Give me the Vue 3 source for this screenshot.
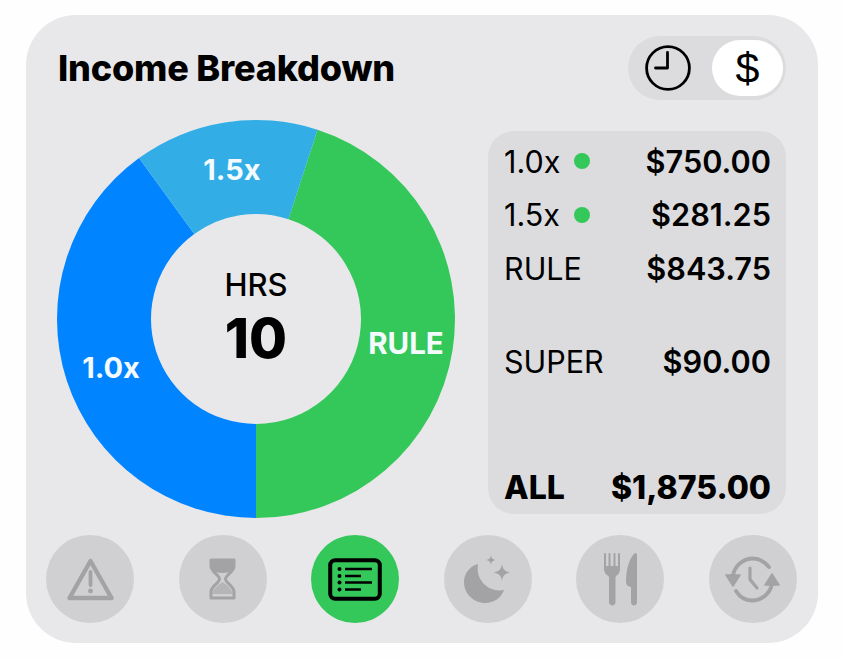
<script setup>
const rows = [
  { label: '1.0x', dot: true, value: '$750.00' },
  { label: '1.5x', dot: true, value: '$281.25' },
  { label: 'RULE', dot: false, value: '$843.75' },
]
const cx = 200, cy = 200, R = 199, r = 105
function pt(rad, deg) {
  const a = (deg - 90) * Math.PI / 180
  return `${(cx + rad * Math.cos(a)).toFixed(2)} ${(cy + rad * Math.sin(a)).toFixed(2)}`
}
function arc(a, b) {
  const large = b - a > 180 ? 1 : 0
  return `M${pt(R, a)}A${R} ${R} 0 ${large} 1 ${pt(R, b)}L${pt(r, b)}A${r} ${r} 0 ${large} 0 ${pt(r, a)}Z`
}
const segments = [
  { d: arc(18, 180), fill: '#34c759' },
  { d: arc(180, 324), fill: '#0084ff' },
  { d: arc(324, 378), fill: '#32ade6' },
]
</script>

<template>
  <div class="page">
    <div class="card">
      <header class="head">
        <h1 class="title">Income Breakdown</h1>
        <div class="toggle">
          <span class="opt">
            <svg width="46" height="46" viewBox="0 0 46 46" fill="none" stroke="#000" stroke-width="2.800">
              <circle cx="23" cy="23" r="21.400" />
              <path d="M22.500 7.500V23H10.500" stroke-linecap="round" stroke-linejoin="round" />
            </svg>
          </span>
          <span class="opt on">$</span>
        </div>
      </header>

      <div class="main">
        <div class="donut">
          <svg width="400" height="400" viewBox="0 0 400 400">
            <path v-for="s in segments" :key="s.fill" :d="s.d" :fill="s.fill" />
          </svg>
          <span class="seg s15">1.5x</span>
          <span class="seg s10">1.0x</span>
          <span class="seg srule">RULE</span>
          <div class="center">
            <span class="hrs">HRS</span>
            <span class="num">10</span>
          </div>
        </div>

        <div class="panel">
          <div class="rows">
            <div v-for="row in rows" :key="row.label" class="row">
              <span class="lab">{{ row.label }}<i v-if="row.dot" class="dot"></i></span>
              <span class="val">{{ row.value }}</span>
            </div>
          </div>
          <div class="row super">
            <span class="lab">SUPER</span>
            <span class="val">$90.00</span>
          </div>
          <div class="row all">
            <span class="lab">ALL</span>
            <span class="val">$1,875.00</span>
          </div>
        </div>
      </div>

      <nav class="tabs">
        <span class="tab">
          <svg width="47" height="43" viewBox="0 0 47 43" fill="none">
            <path d="M23.500 3L44.500 40H2.500Z" stroke="#a3a3a6" stroke-width="4.400" stroke-linejoin="round" />
            <path d="M23.500 14V27" stroke="#a3a3a6" stroke-width="3.800" stroke-linecap="round" />
            <circle cx="23.500" cy="33" r="2.400" fill="#a3a3a6" />
          </svg>
        </span>
        <span class="tab">
          <svg width="27" height="42" viewBox="0 0 27 42" fill="none">
            <path d="M2 2H25V8C25 14 16.500 17 16.500 21C16.500 25 25 28 25 34V40H2V34C2 28 10.500 25 10.500 21C10.500 17 2 14 2 8Z" stroke="#a3a3a6" stroke-width="3" stroke-linejoin="round" />
            <path d="M1 1H26V8C26 11.500 22 15 13.500 15C5 15 1 11.500 1 8Z" fill="#a3a3a6" />
            <path d="M13.500 15V24C9 27 5 30 3 36H24C22 30 18 27 13.500 24Z" fill="#a3a3a6" opacity=".6" />
          </svg>
        </span>
        <span class="tab active">
          <svg width="54" height="43" viewBox="0 0 54 43" fill="none">
            <rect x="2.200" y="2.200" width="49.600" height="38.600" rx="5" stroke="#000" stroke-width="4" />
            <g fill="#000">
              <circle cx="11.500" cy="11" r="2" /><circle cx="11.500" cy="18" r="2" /><circle cx="11.500" cy="24.500" r="2" /><circle cx="11.500" cy="31.500" r="2" />
            </g>
            <path d="M17 11H44M17 18H33M17 24.500H44M17 31.500H33" stroke="#000" stroke-width="2.600" />
          </svg>
        </span>
        <span class="tab">
          <svg width="47" height="48" viewBox="0 0 47 48" fill="#a3a3a6">
            <path d="M14 9C4 12 0 20 0 27C0 39 10 48 21 48C30 48 37 43 40 35C26 38 11 26 14 9Z" />
            <path d="M27 0C27.600 3.500 28.500 4.400 32 5C28.500 5.600 27.600 6.500 27 10C26.400 6.500 25.500 5.600 22 5C25.500 4.400 26.400 3.500 27 0Z" />
            <path d="M38 9C38.800 14.500 41 16.500 46.500 17.500C41 18.500 38.800 20.500 38 26C37.200 20.500 35 18.500 29.500 17.500C35 16.500 37.200 14.500 38 9Z" />
          </svg>
        </span>
        <span class="tab">
          <svg width="33" height="54" viewBox="0 0 33 54" fill="#a3a3a6">
            <path d="M0 2C0 .5 2 .5 2 2V14H4.500V2C4.500 .5 6.500 .5 6.500 2V14H9.500V2C9.500 .5 11.500 .5 11.500 2V14H14V2C14 .5 16 .5 16 2V17C16 22 12.500 23 11.500 25V50C11.500 54.500 5 54.500 5 50V25C4 23 0 22 0 17Z" />
            <path d="M31 1C32.500 .5 33 2 33 3V50C33 54.500 27 54.500 27 50V35C24 34.500 22 33 22 30C22 18 25 6 31 1Z" />
          </svg>
        </span>
        <span class="tab">
          <svg width="55" height="47" viewBox="0 0 55 47" fill="none">
            <path d="M8 19C10 9.500 18 2.500 28 2.500C34 2.500 39 5 44 11" stroke="#a3a3a6" stroke-width="3.800" stroke-linecap="round" />
            <path d="M47 28C45 37.500 37 44.500 27 44.500C21 44.500 15 41.500 11 35" stroke="#a3a3a6" stroke-width="3.800" stroke-linecap="round" />
            <path d="M1 19H15L8 30Z" fill="#a3a3a6" stroke="#a3a3a6" stroke-width="1.500" stroke-linejoin="round" />
            <path d="M40 29H54L47 18Z" fill="#a3a3a6" stroke="#a3a3a6" stroke-width="1.500" stroke-linejoin="round" />
            <path d="M25 12V23.500L32 32" stroke="#a3a3a6" stroke-width="3.200" stroke-linecap="round" stroke-linejoin="round" />
          </svg>
        </span>
      </nav>
    </div>
  </div>
</template>

<style scoped>
.page {
  width: 844px;
  height: 658px;
  padding: 15px 26px;
  box-sizing: border-box;
  background: #fefefe;
  font-family: Inter, "Liberation Sans", sans-serif;
  color: #000;
}
.card {
  height: 628px;
  box-sizing: border-box;
  background: #e8e8ea;
  border-radius: 50px;
  padding: 21px 21px 20px 20px;
  display: flex;
  flex-direction: column;
}
.head {
  display: flex;
  justify-content: space-between;
  align-items: center;
  padding: 0 11px 0 12px;
  height: 64px;
}
.title {
  margin: 0;
  font-size: 36px;
  font-weight: 800;
  letter-spacing: -0.2px;
}
.toggle {
  width: 158px;
  height: 64px;
  box-sizing: border-box;
  border-radius: 32px;
  background: #dcdcde;
  padding: 4px 3px 4px 0;
  display: flex;
  align-items: center;
}
.opt {
  flex: 1;
  height: 56px;
  padding-right: 5px;
  border-radius: 28px;
  display: flex;
  align-items: center;
  justify-content: center;
  font-size: 43px;
  font-family: "Liberation Sans", sans-serif;
}
.opt.on {
  flex: 0 0 71px;
  padding-right: 0;
  background: #fff;
}
.main {
  display: flex;
  justify-content: space-between;
  align-items: flex-start;
  margin-top: 18px;
  padding: 0 11px 0 10px;
}
.donut {
  position: relative;
  width: 400px;
  height: 400px;
  margin-top: 1px;
  flex: none;
}
.donut svg {
  display: block;
}
.seg {
  position: absolute;
  transform: translate(-50%, -50%);
  color: #f4fbff;
  font-size: 29px;
  font-weight: 700;
}
.s15 { left: 176px; top: 50px; }
.s10 { left: 55px; top: 248px; }
.srule { left: 350px; top: 224px; font-size: 29.500px; }
.center {
  position: absolute;
  left: 95px;
  top: 95px;
  width: 210px;
  height: 210px;
  display: flex;
  flex-direction: column;
  align-items: center;
  justify-content: center;
}
.hrs { font-size: 31px; font-weight: 500; line-height: 38px; margin-top: -2px; }
.num { font-size: 55px; font-weight: 800; line-height: 64px; margin-top: 2px; }
.panel {
  width: 298px;
  height: 383px;
  margin-top: 13px;
  box-sizing: border-box;
  border-radius: 26px;
  background: #dcdcde;
  padding: 10px 15px 7px 16px;
  display: flex;
  flex-direction: column;
}
.rows {
  display: flex;
  flex-direction: column;
  gap: 13.500px;
}
.row {
  display: flex;
  justify-content: space-between;
  align-items: center;
  height: 40px;
  font-size: 30.700px;
}
.lab { display: flex; align-items: center; font-weight: 400; font-size: 30.500px; }
.val { font-weight: 600; }
.dot {
  width: 16px;
  height: 16px;
  border-radius: 50%;
  background: #34c759;
  margin-left: 14px;
}
.super { margin-top: 53px; }
.all { margin-top: auto; }
.all .lab { font-weight: 800; font-size: 32px; }
.all .val { font-weight: 800; font-size: 32px; }
.tabs {
  display: flex;
  justify-content: space-between;
  margin-top: auto;
}
.tab {
  width: 88px;
  height: 88px;
  border-radius: 50%;
  background: #d0d0d2;
  display: flex;
  align-items: center;
  justify-content: center;
}
.tab.active { background: #34c759; }
</style>

<style>
html, body { background: #fefefe; }
</style>
